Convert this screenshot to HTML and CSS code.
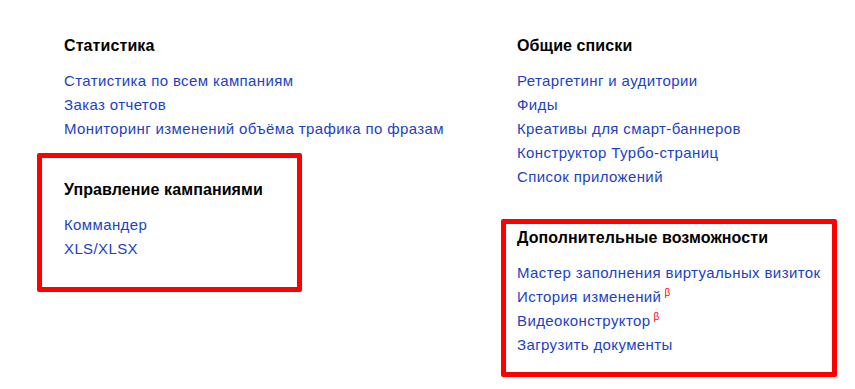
FILE: index.html
```html
<!DOCTYPE html>
<html lang="ru">
<head>
  <meta charset="UTF-8" />
  <meta name="viewport" content="width=device-width, initial-scale=1.0" />
  <title>Инструменты</title>
  <link rel="stylesheet" href="styles.css">
</head>
<body>
  <div class="tools">
    <div class="column">
      <section class="group">
        <h3>Статистика</h3>
        <ul>
          <li><a href="#">Статистика по всем кампаниям</a></li>
          <li><a href="#">Заказ отчетов</a></li>
          <li><a href="#">Мониторинг изменений объёма трафика по фразам</a></li>
        </ul>
      </section>
      <section class="group marked marked-left">
        <h3>Управление кампаниями</h3>
        <ul>
          <li><a href="#">Коммандер</a></li>
          <li><a href="#">XLS/XLSX</a></li>
        </ul>
      </section>
    </div>
    <div class="column">
      <section class="group">
        <h3>Общие списки</h3>
        <ul>
          <li><a href="#">Ретаргетинг и аудитории</a></li>
          <li><a href="#">Фиды</a></li>
          <li><a href="#">Креативы для смарт-баннеров</a></li>
          <li><a href="#">Конструктор Турбо-страниц</a></li>
          <li><a href="#">Список приложений</a></li>
        </ul>
      </section>
      <section class="group marked marked-right">
        <h3>Дополнительные возможности</h3>
        <ul>
          <li><a href="#">Мастер заполнения виртуальных визиток</a></li>
          <li><a href="#">История изменений</a><sup class="beta">β</sup></li>
          <li><a href="#">Видеоконструктор</a><sup class="beta">β</sup></li>
          <li><a href="#">Загрузить документы</a></li>
        </ul>
      </section>
    </div>
  </div>
</body>
</html>
```
FILE: styles.css
```css
html, body {
  min-height: 100%;
}
body {
  margin: 0;
  min-height: 389px;
  background: #fff;
  font-family: "Liberation Sans", Arial, sans-serif;
  font-size: 15px;
  color: #000;
}
.tools {
  display: grid;
  grid-template-columns: 453px 1fr;
  padding: 34px 0 40px 64px;
}
.column {
  display: flex;
  flex-direction: column;
  gap: 37px;
}
.group {
  position: relative;
}
.group h3 {
  margin: 0 0 11px;
  font-size: 16px;
  line-height: 24px;
  font-weight: bold;
  letter-spacing: 0.1px;
}
.group ul {
  list-style: none;
  margin: 0;
  padding: 0;
}
.group li {
  line-height: 24px;
  letter-spacing: 0.38px;
}
.group a {
  color: #1c3fc4;
  text-decoration: none;
}
.beta {
  color: #f00;
  font-size: 10px;
  margin-left: 3px;
  vertical-align: 6px;
  line-height: 0;
}
.marked::before {
  content: "";
  position: absolute;
  border: 5px solid #f00;
  border-radius: 2px;
}
.marked-left::before {
  left: -27px;
  top: -25px;
  width: 255px;
  height: 129px;
}
.marked-right::before {
  left: -16px;
  top: -7px;
  width: 326px;
  height: 148px;
}
```
